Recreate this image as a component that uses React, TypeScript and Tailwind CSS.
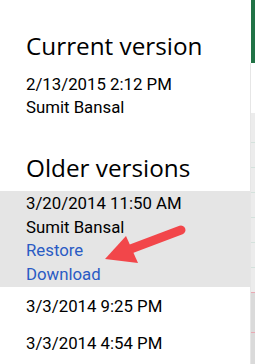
import React from "react";

// version history side panel (Office Online style)
const OLDER = ["3/3/2014 9:25 PM", "3/3/2014 4:54 PM"];

function Arrow() {
  return (
    <svg className="absolute left-0 top-0 pointer-events-none" width="255" height="364" viewBox="0 0 255 364">
      <line x1="181" y1="230" x2="128" y2="250" stroke="#f2464a" strokeWidth="9" strokeLinecap="round" />
      <polygon points="105,259 126,236 138,263" fill="#f2464a" />
    </svg>
  );
}

function Strip() {
  return (
    <div className="w-[5px] flex flex-col shrink-0">
      <div className="h-[63px] bg-[#217346] border-l border-white" />
      <div className="h-[50px] bg-white border-l border-[#e6e6e6]" />
      <div className="h-[29px] bg-[#ececec] border-l border-[#e6e6e6]" />
      {[0, 1, 2, 3, 4, 5].map((i) => (
        <div key={i} className="border-l border-[#e6e6e6]">
          <div className="h-px bg-[#d3e2dc]" />
          <div className="h-[24px] bg-[#ececec]" />
        </div>
      ))}
      <div className="border-l border-[#e6e6e6] flex-1 bg-[#dadada]">
        <div className="h-px bg-[#e9a9b3]" />
        <div className="h-[39px]" />
        <div className="h-px bg-[#e9a9b3]" />
      </div>
    </div>
  );
}

export default function App() {
  return (
    <div className="relative w-[255px] h-[364px] overflow-hidden bg-white flex text-black">
      <div className="w-[250px] shrink-0 flex flex-col pt-[30px] font-['Roboto',sans-serif]">
        <div className="px-[26px]">
          <h1 className="text-[24.3px] leading-[32px] font-normal font-['Open_Sans',sans-serif]">Current version</h1>
          <div className="mt-[11px] text-[16.8px] leading-[22.5px]">
            <div>2/13/2015 2:12 PM</div>
            <div>Sumit Bansal</div>
          </div>
          <h2 className="mt-[34px] text-[24.3px] leading-[32px] font-normal font-['Open_Sans',sans-serif]">Older versions</h2>
        </div>

        <div className="mt-[7px] bg-[#e5e5e5] px-[26px] pt-[1px] pb-[1px] text-[16.8px] leading-[23.5px]">
          <div>3/20/2014 11:50 AM</div>
          <div>Sumit Bansal</div>
          <div className="text-[#2a5bc4]">Restore</div>
          <div className="text-[#2a5bc4]">Download</div>
        </div>

        {OLDER.map((d) => (
          <div key={d} className="h-[37px] px-[26px] pt-[8px] text-[16.8px] leading-[23px]">
            {d}
          </div>
        ))}
      </div>
      <Strip />
      <Arrow />
    </div>
  );
}
